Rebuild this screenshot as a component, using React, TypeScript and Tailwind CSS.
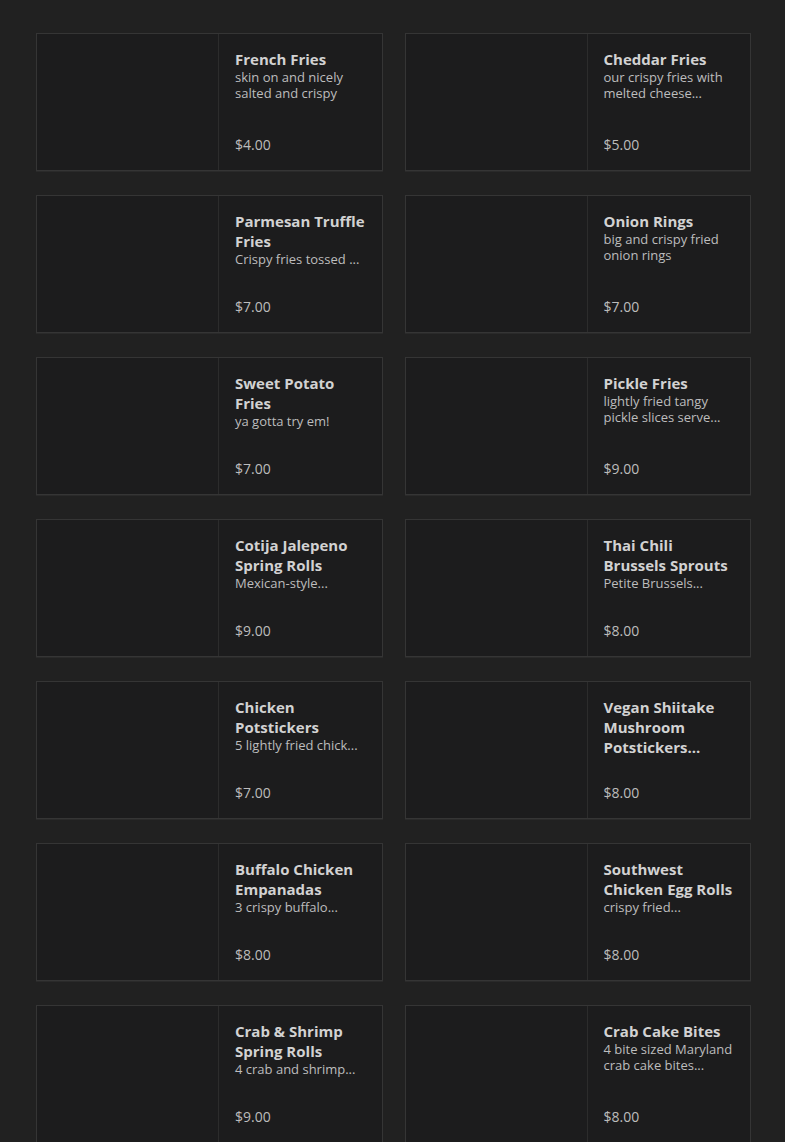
const items = [
  { name: "French Fries", desc: "skin on and nicely salted and crispy", price: "$4.00" },
  { name: "Cheddar Fries", desc: "our crispy fries with melted cheese...", price: "$5.00" },
  { name: "Parmesan Truffle Fries", desc: "Crispy fries tossed ...", price: "$7.00" },
  { name: "Onion Rings", desc: "big and crispy fried onion rings", price: "$7.00" },
  { name: "Sweet Potato Fries", desc: "ya gotta try em!", price: "$7.00" },
  { name: "Pickle Fries", desc: "lightly fried tangy pickle slices serve...", price: "$9.00" },
  { name: "Cotija Jalepeno Spring Rolls", desc: "Mexican-style...", price: "$9.00" },
  { name: "Thai Chili Brussels Sprouts", desc: "Petite Brussels...", price: "$8.00" },
  { name: "Chicken Potstickers", desc: "5 lightly fried chick...", price: "$7.00" },
  { name: "Vegan Shiitake Mushroom Potstickers...", desc: "", price: "$8.00" },
  { name: "Buffalo Chicken Empanadas", desc: "3 crispy buffalo...", price: "$8.00" },
  { name: "Southwest Chicken Egg Rolls", desc: "crispy fried...", price: "$8.00" },
  { name: "Crab & Shrimp Spring Rolls", desc: "4 crab and shrimp...", price: "$9.00" },
  { name: "Crab Cake Bites", desc: "4 bite sized Maryland crab cake bites...", price: "$8.00" },
];

function Card({ item }: { item: (typeof items)[number] }) {
  return (
    <div className="flex h-[138px] border border-[#353535] bg-[#1c1c1d] shadow-[0_1px_0_#2a2a2a]">
      {/* image placeholder */}
      <div className="w-[182px] shrink-0 border-r border-[#2c2c2c]" />
      <div className="flex min-w-0 flex-1 flex-col justify-between pt-[15px] pb-[15px] pl-[16px] pr-[12px]">
        <div>
          <h3 className="text-[15px] leading-[20px] font-bold text-[#d2d2d2]">
            {item.name}
          </h3>
          {item.desc && (
            <p className="text-[13px] leading-[16px] text-[#bdbdbd]">{item.desc}</p>
          )}
        </div>
        <p className="text-[14px] leading-[20px] text-[#bcbcbc]">{item.price}</p>
      </div>
    </div>
  );
}

export default function App() {
  return (
    <div
      className="min-h-[1142px] bg-[#212121] pt-[33px]"
      style={{ fontFamily: "'Open Sans', 'Noto Sans', sans-serif" }}
    >
      <div className="ml-[36px] grid w-[715px] grid-cols-2 gap-x-[22px] gap-y-[24px]">
        {items.map((item) => (
          <Card key={item.name} item={item} />
        ))}
      </div>
    </div>
  );
}
